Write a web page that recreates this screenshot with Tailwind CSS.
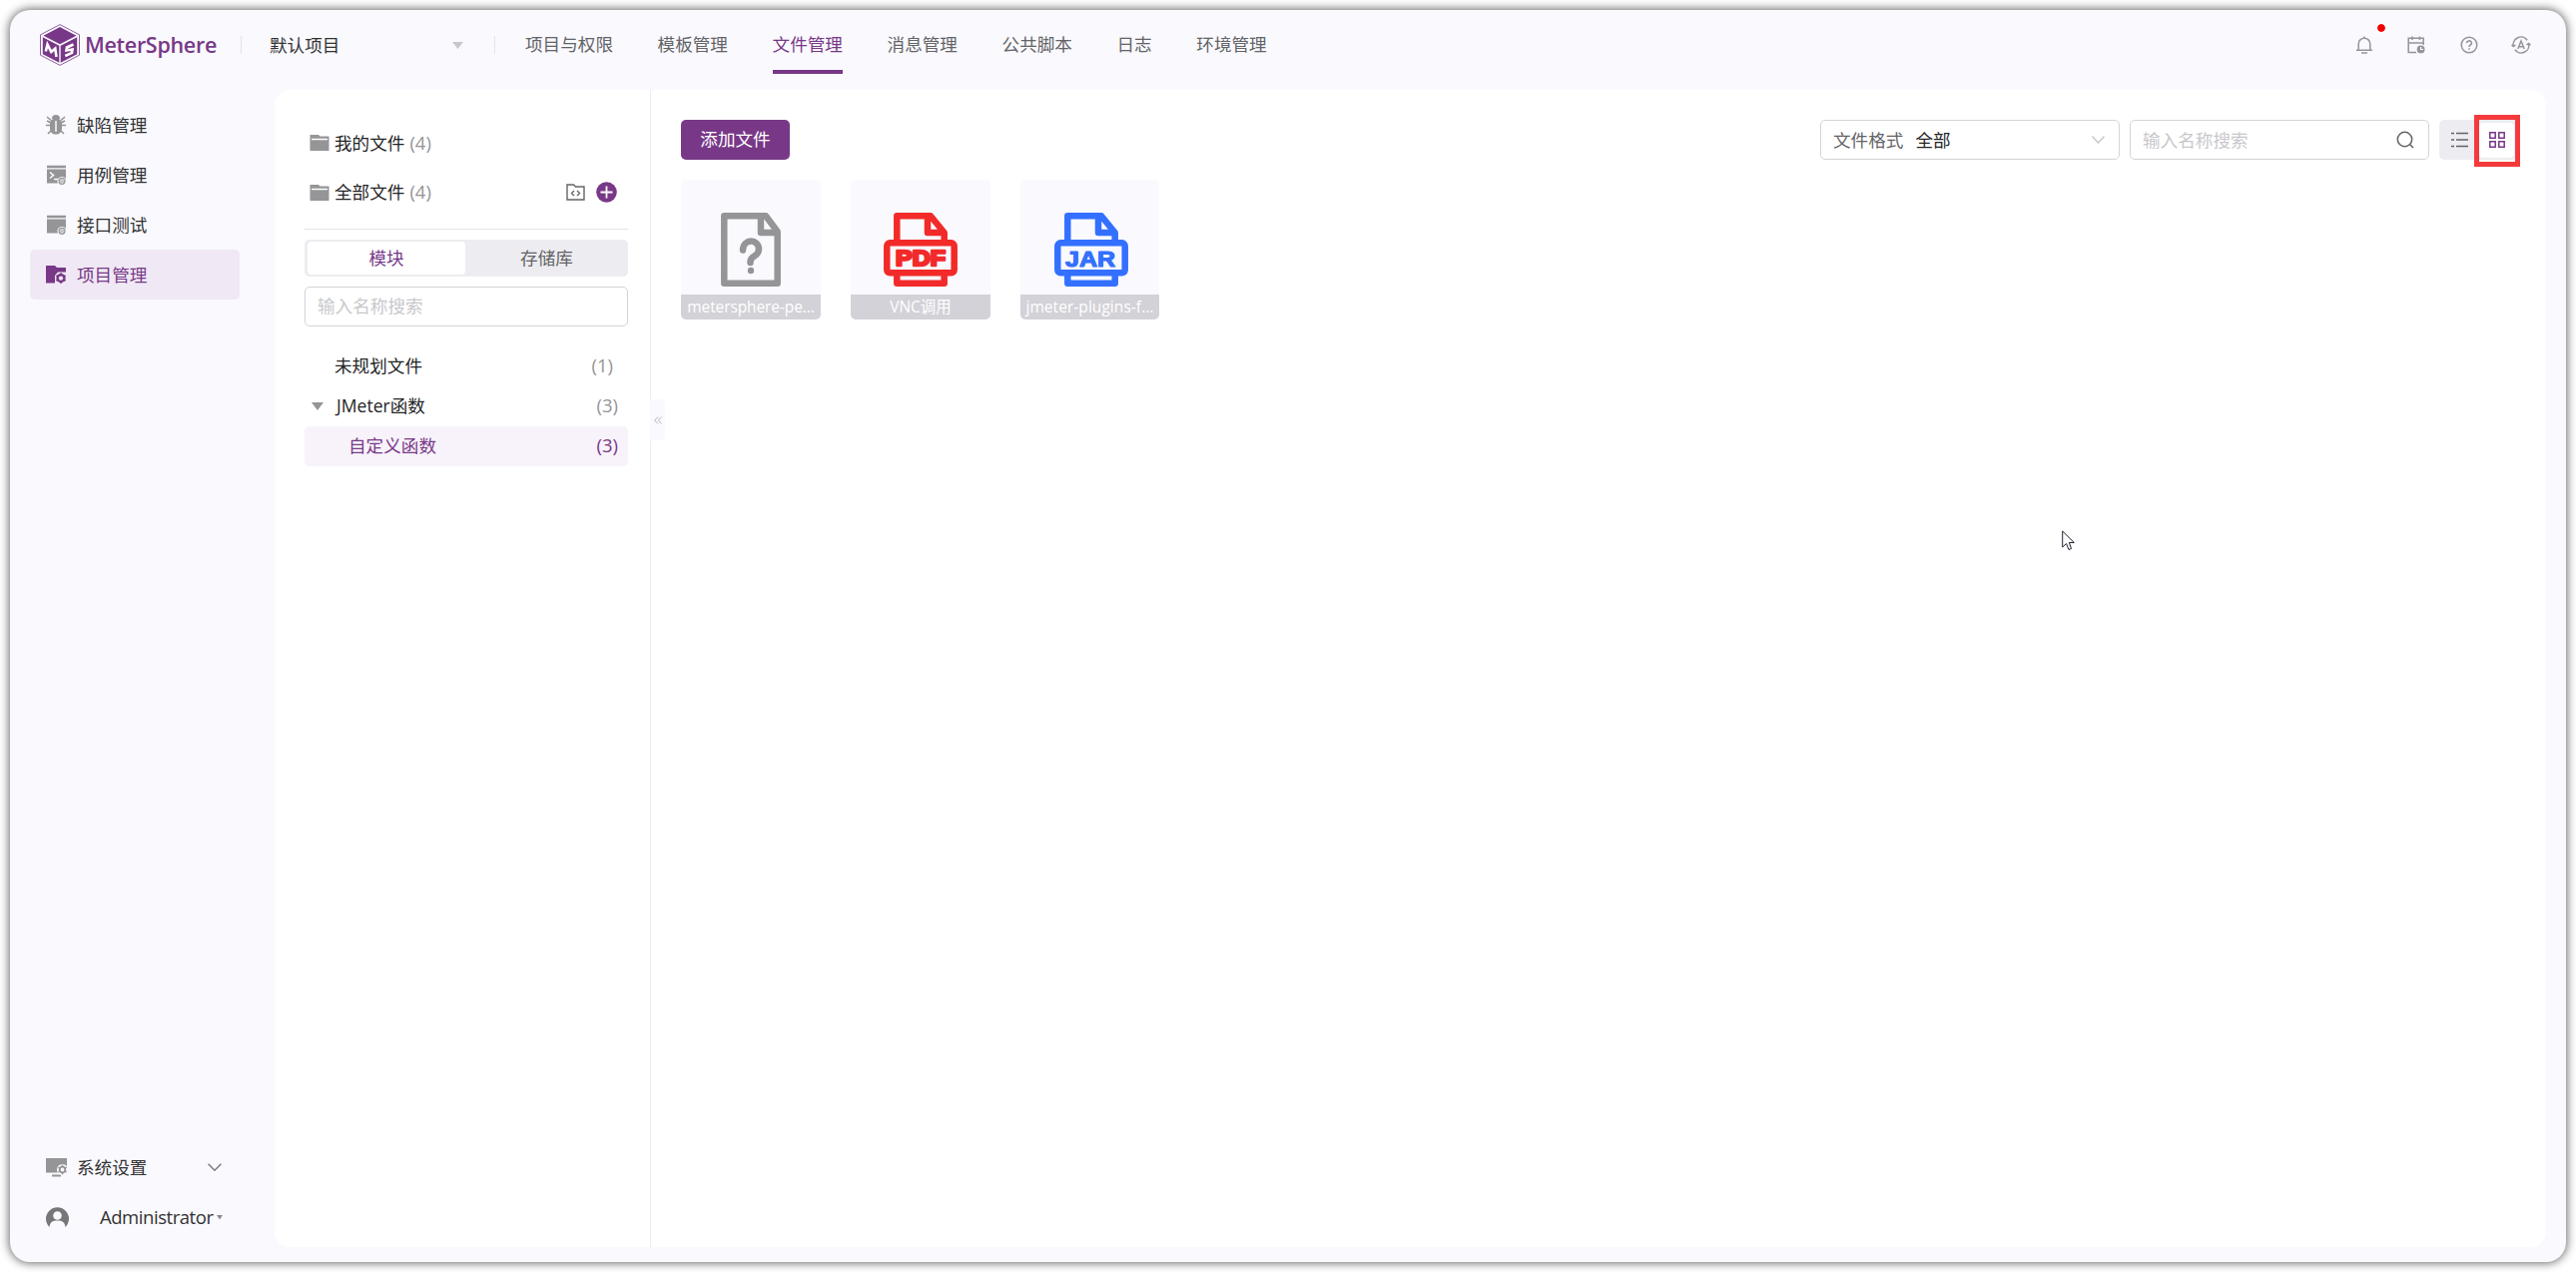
<!DOCTYPE html>
<html lang="zh-CN">
<head>
<meta charset="utf-8">
<title>MeterSphere</title>
<script src="https://cdn.jsdelivr.net/npm/@tailwindcss/browser@4"></script>
</head>
<body class="bg-white w-[2580px] h-[1274px] overflow-hidden p-[10px] font-['Open_Sans','Noto_Sans_CJK_SC',sans-serif] text-[17.6px] leading-[26px] text-[#323233] font-normal">
<div class="w-[2560px] h-[1254px] rounded-[20px] bg-[#f9f9fe] shadow-[0_0_10px_1px_rgba(0,0,0,0.6)] flex flex-col relative">
  <header class="h-20 shrink-0 flex items-center pb-[10px] pl-[30px] relative">
    <svg class="w-10 h-[42px] shrink-0" viewBox="0 0 40 42">
      <path d="M20 .6 39.5 10.8V31.2L20 41.4.5 31.2V10.8Z" fill="none" stroke="#783887" stroke-width=".8"/>
      <path d="M20 3 36.5 11.8 20 20.3 3.5 11.8Z M2.8 13.3 19.3 21.8V38.8L2.8 30.2Z M37.2 13.3 20.7 21.8V38.8L37.2 30.2Z" fill="#783887"/>
      <path d="M5.800 27.500 7.500 20.500 11.300 28 15.300 24.500 16.500 33M33.500 20.500 27 23.500 26.500 26.500 32.500 25.500 32 28.800 25.300 32" fill="none" stroke="#fff" stroke-width="2.600"/>
    </svg>
    <span class="ml-[5px] w-[130px] text-[21.5px] font-semibold text-[#783887] whitespace-nowrap tracking-[-0.3px]">MeterSphere</span>
    <span class="ml-[26px] w-px h-[18px] bg-[#e3e3e8]"></span>
    <span class="ml-[28px] w-[183px] pb-px">默认项目</span>
    <svg class="w-[11px] h-[7px]" viewBox="0 0 11 7"><path d="M0 0H11L5.5 7Z" fill="#c8c8cc"/></svg>
    <span class="ml-[31px] w-px h-[18px] bg-[#e3e3e8]"></span>
    <nav class="ml-[30px] flex gap-[44.6px] pb-[2px] text-[#646466]">
      <span>项目与权限</span><span>模板管理</span>
      <span class="relative text-[#783887]">文件管理<i class="absolute left-0 right-0 top-[39px] h-1 bg-[#783887]"></i></span>
      <span>消息管理</span><span>公共脚本</span><span>日志</span><span>环境管理</span>
    </nav>
    <div class="ml-auto mr-[35px] flex gap-[32.4px] relative">
      <svg class="w-5 h-5" viewBox="0 0 20 20" fill="none" stroke="#959598" stroke-width="1.5"><path d="M4.2 14.8V9a5.8 5.8 0 0 1 11.6 0v5.8M2 15.2H18M7 18H13M10 1.5V3.5"/></svg>
      <svg class="w-5 h-5" viewBox="0 0 20 20" fill="none" stroke="#959598" stroke-width="1.5"><path d="M10 17.4H2.2V3.2H17.2V10M2.2 8H17.2M6 1.5V5M13.5 1.5V5"/><circle cx="14.6" cy="14.4" r="3.9" fill="#959598" stroke="none"/><path d="M14.6 12V14.5H17" stroke="#f9f9fe" stroke-width="1.2"/></svg>
      <svg class="w-5 h-5" viewBox="0 0 20 20" fill="none" stroke="#959598" stroke-width="1.5"><circle cx="10" cy="10" r="7.8"/><path d="M7.6 8.2a2.4 2.2 0 1 1 3.6 1.8Q10 10.6 10 12M10 13.2V14.8"/></svg>
      <svg class="w-5 h-5" viewBox="0 0 20 20" fill="none" stroke="#959598" stroke-width="1.5"><path d="M2.3 11.5A7.8 7.8 0 0 1 16.2 5.2M17.7 8.5A7.8 7.8 0 0 1 3.8 14.8M.5 10 2.4 11.6 4.4 10M15.6 10 17.6 8.4 19.5 10M6.8 14 10 6 13.2 14M8 11.8H12"/></svg>
      <i class="absolute left-[23px] top-[-11px] w-[8px] h-[8px] rounded-full bg-[#f20000] outline-1 outline-white"></i>
    </div>
  </header>
  <div class="flex grow">
    <aside class="w-[265px] px-5 pt-[10px] flex flex-col shrink-0">
      <div class="w-[210px] h-[50px] pl-4 flex items-center gap-[11px]">
        <svg class="w-5 h-5" viewBox="0 0 20 20"><path d="M0 10.5H20M1 2 5 5.5M19 2 15 5.5M2 19 5.5 15.5M18 19 14.5 15.5M1 6 5 8M19 6 15 8" stroke="#959598" stroke-width="1.6" fill="none"/><path d="M6 4a4 4 0 0 1 8 0Z" fill="#959598"/><rect x="4" y="3.5" width="12" height="16" rx="5.5" fill="#959598"/><path d="M10 6V17" stroke="#f9f9fe" stroke-width="1.5"/></svg>
        <span>缺陷管理</span></div>
      <div class="w-[210px] h-[50px] pl-4 flex items-center gap-[11px]">
        <svg class="w-5 h-5" viewBox="0 0 20 20"><path d="M1 .8H20V3.2H1ZM1 4.6H20V18.5H1Z" fill="#959598"/><path d="M4 7.5 7.5 10.5 4 13.5M8 14.5H12" stroke="#f9f9fe" stroke-width="1.6" fill="none"/><circle cx="16" cy="16.5" r="4.6" fill="#f9f9fe"/><circle cx="16" cy="16.3" r="3" stroke="#959598" stroke-width="1.2" fill="none"/><path d="M15 14.5V18M17 14.5V18" stroke="#959598"/></svg>
        <span>用例管理</span></div>
      <div class="w-[210px] h-[50px] pl-4 flex items-center gap-[11px]">
        <svg class="w-5 h-5" viewBox="0 0 20 20"><path d="M1 .8H20V3.2H1ZM1 4.6H20V18.5H1Z" fill="#959598"/><circle cx="16" cy="16.5" r="4.6" fill="#f9f9fe"/><circle cx="16" cy="16.3" r="3" stroke="#959598" stroke-width="1.2" fill="none"/><path d="M15 14.5V18M17 14.5V18" stroke="#959598"/></svg>
        <span>接口测试</span></div>
      <div class="w-[210px] h-[50px] pl-4 flex items-center gap-[11px] rounded-[5px] bg-[#f0e8f5] text-[#783887]">
        <svg class="w-5 h-5" viewBox="0 0 20 20"><path d="M0 1H9L11 3H20V18.5H0Z" fill="#783887"/><path d="M9 20V11L12 7.500H20V20Z" fill="#f0e8f5"/><circle cx="15" cy="13.600" r="3.400" fill="none" stroke="#783887" stroke-width="2.400"/><path d="M15 8.500V11M15 16V18.800M10.500 11 12.500 12.200M17.500 15 19.500 16.200M10.500 16.200 12.500 15M17.500 12.200 19.500 11" stroke="#783887" stroke-width="2"/></svg>
        <span>项目管理</span></div>
      <div class="mt-auto w-[210px] h-[50px] pl-4 flex items-center gap-[11px]">
        <svg class="w-[21px] h-5" viewBox="0 0 21 20"><path d="M0 1H21V15.500H0ZM6 17.5H15V19.5H6Z" fill="#959598"/><circle cx="16.500" cy="12.500" r="5.500" fill="#f9f9fe"/><circle cx="16.500" cy="12.500" r="2.800" fill="none" stroke="#959598" stroke-width="1.800"/><path d="M16.500 7.800V10M16.500 15V17.200M12.400 10.200 14.300 11.300M18.700 13.700 20.600 14.800M12.400 14.800 14.300 13.700M18.700 11.300 20.600 10.200" stroke="#959598" stroke-width="1.500"/></svg>
        <span class="-ml-px">系统设置</span>
        <svg class="ml-auto mr-[18px] w-[14px] h-2" viewBox="0 0 14 8"><path d="M.6.7 7 7.2 13.4.7" fill="none" stroke="#77777a" stroke-width="1.4"/></svg></div>
      <div class="mb-[20px] w-[210px] h-[50px] pl-4 flex items-center">
        <svg class="w-[23px] h-5" viewBox="0 0 23 20"><path d="M3.5 20A11.5 11.5 0 1 1 19.5 20C19 14.5 15.500 13.500 11.500 13.500S4 14.500 3.500 20Z" fill="#77777a"/><circle cx="11.500" cy="8.500" r="4.300" fill="#f9f9fe"/></svg>
        <span class="ml-[31px] w-[117px] text-[18.5px] tracking-[-0.45px]">Administrator</span>
        <svg class="w-[6px] h-[5px]" viewBox="0 0 6 5"><path d="M0 0H6L3 4.500Z" fill="#8a8a8d"/></svg></div>
    </aside>
    <main class="w-[2275px] h-[1159px] rounded-[15px] bg-white flex">
      <section class="w-[377px] shrink-0 border-r border-[#ededf1] pl-[30px] pr-[22px] relative">
        <div class="mt-[28px] h-[50px] pl-[5px] flex items-center text-[#252526]">
          <svg class="w-5 h-4 mr-[5px]" viewBox="0 0 20 16"><path d="M.5 0H9L10.500 1.500H19.500V16H.500Z" fill="#959598"/><path d="M2 4.500H18" stroke="#fff" stroke-width="1.500"/></svg>
          <span class="-mt-px">我的文件<span class="ml-[5px] text-[18.5px] text-[#959598]">(4)</span></span></div>
        <div class="h-[49px] pl-[5px] pr-[11px] flex items-center text-[#252526]">
          <svg class="w-5 h-4 mr-[5px]" viewBox="0 0 20 16"><path d="M.5 0H9L10.500 1.500H19.500V16H.500Z" fill="#959598"/><path d="M2 4.500H18" stroke="#fff" stroke-width="1.500"/></svg>
          <span class="-mt-[2px]">全部文件<span class="ml-[5px] text-[18.5px] text-[#959598]">(4)</span></span>
          <svg class="ml-auto w-[19px] h-[17px]" viewBox="0 0 19 17" fill="none" stroke="#646466" stroke-width="1.400"><path d="M1 1H7.500L9.500 3H18V16H1ZM8 7 5.500 9.500 8 12M11 7 13.500 9.500 11 12"/></svg>
          <svg class="ml-[11px] w-[21px] h-[21px]" viewBox="0 0 21 21"><circle cx="10.500" cy="10.500" r="10.300" fill="#783887"/><path d="M10.500 4.500V16.500M4.500 10.500H16.500" stroke="#fff" stroke-width="1.800"/></svg></div>
        <div class="mt-[12px] h-px bg-[#e3e3e8]"></div>
        <div class="mt-[10px] h-[37px] rounded-[5px] bg-[#ededf1] pl-[3px] py-[2px] flex text-[#646466]">
          <span class="w-[158px] rounded-[4px] bg-white text-[#783887] flex items-center justify-center pb-px">模块</span>
          <span class="grow flex items-center justify-center pb-px">存储库</span></div>
        <div class="mt-[10px] h-10 rounded-[5px] border border-[#d4d4d8] pl-[12px] pb-[2px] flex items-center text-[#c8c8cc]">输入名称搜索</div>
        <div class="mt-[19px] h-10 pl-[30px] pr-[15px] flex items-center justify-between text-[#252526]">未规划文件<span class="text-[18.5px] text-[#959598]">(1)</span></div>
        <div class="h-10 pl-[7px] pr-[10px] flex items-center text-[#252526]">
          <svg class="w-3 h-2 mr-[13px] mt-[2px]" viewBox="0 0 12 8"><path d="M0 0H12L6 8Z" fill="#959598"/></svg>JMeter函数<span class="ml-auto text-[18.5px] text-[#959598]">(3)</span></div>
        <div class="mt-px h-10 rounded-[5px] bg-[#f8f3fb] pl-[44px] pr-[10px] pb-[2px] flex items-center justify-between text-[#783887]">自定义函数<span class="text-[18.5px]">(3)</span></div>
        <div class="absolute left-[376px] top-[310px] w-[15px] h-[41px] rounded-r-[5px] bg-[#f9f9fe] flex items-center justify-center">
          <svg class="w-2 h-2" viewBox="0 0 8 8" fill="none" stroke="#b4b4b8"><path d="M4 .5.700 4 4 7.500M7.600.5 4.300 4 7.600 7.500"/></svg></div>
      </section>
      <section class="grow pl-[30px] pr-[28px] pt-[30px]">
        <div class="h-10 flex items-center">
          <div class="w-[109px] h-10 pb-[2px] rounded-[5px] bg-[#783887] text-white flex items-center justify-center">添加文件</div>
          <div class="ml-auto w-[300px] h-10 rounded-[5px] border border-[#d4d4d8] pl-[12px] pr-[14px] flex items-center text-[#646466]"><span class="pb-px">文件格式</span><span class="ml-[12px] pb-px text-[#252526]">全部</span>
            <svg class="ml-auto w-[13px] h-2" viewBox="0 0 13 8"><path d="M.5.500 6.500 7 12.500.500" fill="none" stroke="#c8c8cc" stroke-width="1.400"/></svg></div>
          <div class="ml-[10px] w-[300px] h-10 rounded-[5px] border border-[#d4d4d8] pl-[12px] pr-[14px] flex items-center text-[#c8c8cc]"><span class="pb-px">输入名称搜索</span>
            <svg class="ml-auto w-[18px] h-[18px]" viewBox="0 0 18 18" fill="none" stroke="#646466" stroke-width="1.500"><circle cx="8.500" cy="8.500" r="7.200"/><path d="M13.800 13.800 17 17"/></svg></div>
          <div class="ml-[10px] w-[79px] h-10 rounded-[5px] bg-[#ededf1] flex items-center relative">
            <svg class="ml-[12px] w-[17px] h-4" viewBox="0 0 17 16" stroke="#646466" stroke-width="1.400"><path d="M0 1.500H3M5 1.500H17M0 8H3M5 8H17M0 14.500H3M5 14.500H17"/></svg>
            <div class="ml-[11px] w-[35px] h-[35px] rounded-[4px] bg-white flex items-center justify-center">
              <svg class="w-4 h-4" viewBox="0 0 16 16" fill="none" stroke="#783887" stroke-width="1.500"><path d="M.8.800H6.200V6.200H.800ZM9.800.800H15.200V6.200H9.800ZM.800 9.800H6.200V15.200H.800ZM9.800 9.800H15.200V15.200H9.800Z"/></svg></div>
            <i class="absolute left-[35px] top-[-5px] w-[46px] h-[52px] border-[5px] border-[#f43b3c]"></i>
          </div>
        </div>
        <div class="mt-5 flex gap-[30px] text-[15.5px] text-white">
          <div class="w-[140px] h-[140px] rounded-[5px] overflow-hidden bg-[#f9f9fe] flex flex-col items-center">
            <svg class="mt-[33px] w-[60px] h-[74px]" viewBox="0 0 60 74" fill="none" stroke="#959598" stroke-width="6.500" stroke-linejoin="round"><path d="M3.300 3.300H45L56.700 19V70.700H3.300ZM40 3.300V20H56"/><path d="M22 37.500C22.500 25.500 38 26 38 36.500 38 45 29 42 29.500 50"  stroke-linecap="round"/><circle cx="30" cy="58" r="3.200" fill="#959598" stroke="none"/></svg>
            <span class="mt-auto w-full h-[25px] leading-[25px] bg-[#d3d2d8] text-center tracking-[-0.1px]">metersphere-pe...</span></div>
          <div class="w-[140px] h-[140px] rounded-[5px] overflow-hidden bg-[#f9f9fe] flex flex-col items-center">
            <svg class="mt-[33px] w-[74px] h-[74px]" viewBox="0 0 74 74" fill="none" stroke="#f22a29" stroke-width="6.500" stroke-linejoin="round"><path d="M13.300 28V3.300H47L60.700 20V28M44 3.300V20H58M13.300 62V70.700H60.700V62"/><rect x="3.300" y="30.300" width="67.400" height="30" rx="3"/><text x="37" y="52.500" text-anchor="middle" textLength="50" lengthAdjust="spacingAndGlyphs" font-family="Liberation Sans" font-weight="700" font-size="22" fill="#f22a29" stroke-width="2.500">PDF</text></svg>
            <span class="mt-auto w-full h-[25px] leading-[24px] bg-[#d3d2d8] text-center">VNC调用</span></div>
          <div class="w-[139px] h-[140px] rounded-[5px] overflow-hidden bg-[#f9f9fe] flex flex-col items-center">
            <svg class="mt-[33px] ml-[2px] w-[74px] h-[74px]" viewBox="0 0 74 74" fill="none" stroke="#3370ff" stroke-width="6.500" stroke-linejoin="round"><path d="M13.300 28V3.300H47L60.700 20V28M44 3.300V20H58M13.300 62V70.700H60.700V62"/><rect x="3.300" y="30.300" width="67.400" height="30" rx="3"/><text x="36" y="53.500" text-anchor="middle" textLength="50" lengthAdjust="spacingAndGlyphs" font-family="Liberation Sans" font-weight="700" font-size="22.500" fill="#3370ff" stroke-width="1.200">JAR</text></svg>
            <span class="mt-auto w-full h-[25px] leading-[25px] bg-[#d3d2d8] text-center tracking-[0.05px]">jmeter-plugins-f...</span></div>
        </div>
      </section>
    </main>
  </div>
</div>
<svg class="absolute left-[2065px] top-[531px] w-[13px] h-[21px]" viewBox="0 0 13 21"><path d="M.7 1V17L4.500 13.500 7 19.500 9.500 18.500 7.300 12.500H12.300Z" fill="#fff" stroke="#222230"/></svg>
</body>
</html>
